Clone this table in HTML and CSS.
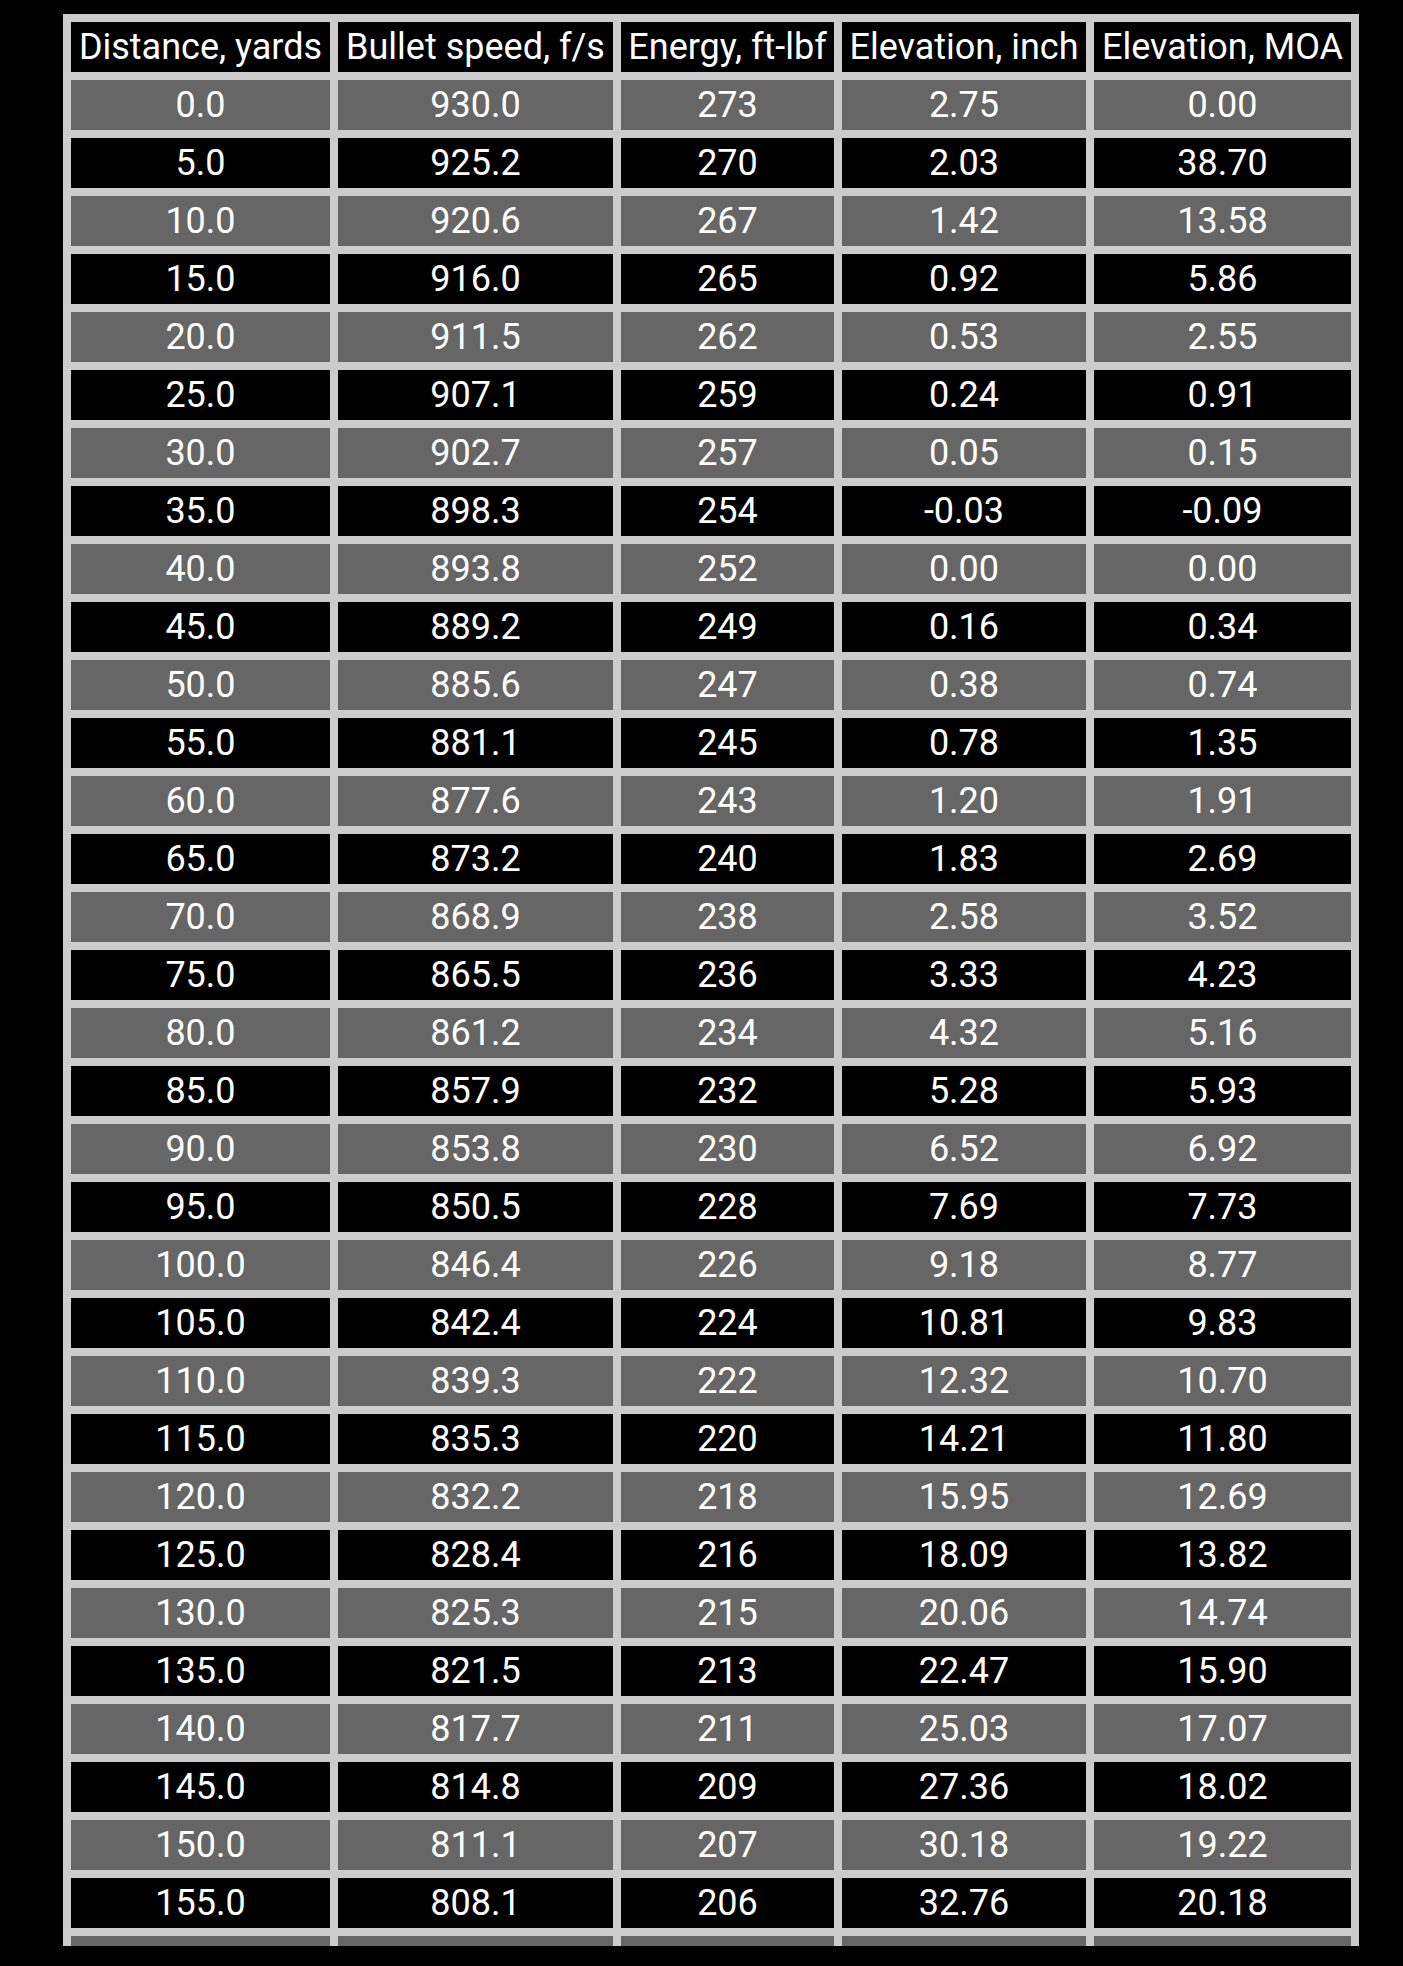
FILE: index.html
```html
<!DOCTYPE html>
<html>
<head>
<meta charset="utf-8">
<link rel="stylesheet" href="styles.css">
</head>
<body>
<div class="viewport">
<table class="ballistics">
<colgroup>
<col class="c1"><col class="c2"><col class="c3"><col class="c4"><col class="c5">
</colgroup>
<thead>
<tr><th>Distance, yards</th><th>Bullet speed, f/s</th><th>Energy, ft-lbf</th><th>Elevation, inch</th><th>Elevation, MOA</th></tr>
</thead>
<tbody>
<tr><td>0.0</td><td>930.0</td><td>273</td><td>2.75</td><td>0.00</td></tr>
<tr><td>5.0</td><td>925.2</td><td>270</td><td>2.03</td><td>38.70</td></tr>
<tr><td>10.0</td><td>920.6</td><td>267</td><td>1.42</td><td>13.58</td></tr>
<tr><td>15.0</td><td>916.0</td><td>265</td><td>0.92</td><td>5.86</td></tr>
<tr><td>20.0</td><td>911.5</td><td>262</td><td>0.53</td><td>2.55</td></tr>
<tr><td>25.0</td><td>907.1</td><td>259</td><td>0.24</td><td>0.91</td></tr>
<tr><td>30.0</td><td>902.7</td><td>257</td><td>0.05</td><td>0.15</td></tr>
<tr><td>35.0</td><td>898.3</td><td>254</td><td>-0.03</td><td>-0.09</td></tr>
<tr><td>40.0</td><td>893.8</td><td>252</td><td>0.00</td><td>0.00</td></tr>
<tr><td>45.0</td><td>889.2</td><td>249</td><td>0.16</td><td>0.34</td></tr>
<tr><td>50.0</td><td>885.6</td><td>247</td><td>0.38</td><td>0.74</td></tr>
<tr><td>55.0</td><td>881.1</td><td>245</td><td>0.78</td><td>1.35</td></tr>
<tr><td>60.0</td><td>877.6</td><td>243</td><td>1.20</td><td>1.91</td></tr>
<tr><td>65.0</td><td>873.2</td><td>240</td><td>1.83</td><td>2.69</td></tr>
<tr><td>70.0</td><td>868.9</td><td>238</td><td>2.58</td><td>3.52</td></tr>
<tr><td>75.0</td><td>865.5</td><td>236</td><td>3.33</td><td>4.23</td></tr>
<tr><td>80.0</td><td>861.2</td><td>234</td><td>4.32</td><td>5.16</td></tr>
<tr><td>85.0</td><td>857.9</td><td>232</td><td>5.28</td><td>5.93</td></tr>
<tr><td>90.0</td><td>853.8</td><td>230</td><td>6.52</td><td>6.92</td></tr>
<tr><td>95.0</td><td>850.5</td><td>228</td><td>7.69</td><td>7.73</td></tr>
<tr><td>100.0</td><td>846.4</td><td>226</td><td>9.18</td><td>8.77</td></tr>
<tr><td>105.0</td><td>842.4</td><td>224</td><td>10.81</td><td>9.83</td></tr>
<tr><td>110.0</td><td>839.3</td><td>222</td><td>12.32</td><td>10.70</td></tr>
<tr><td>115.0</td><td>835.3</td><td>220</td><td>14.21</td><td>11.80</td></tr>
<tr><td>120.0</td><td>832.2</td><td>218</td><td>15.95</td><td>12.69</td></tr>
<tr><td>125.0</td><td>828.4</td><td>216</td><td>18.09</td><td>13.82</td></tr>
<tr><td>130.0</td><td>825.3</td><td>215</td><td>20.06</td><td>14.74</td></tr>
<tr><td>135.0</td><td>821.5</td><td>213</td><td>22.47</td><td>15.90</td></tr>
<tr><td>140.0</td><td>817.7</td><td>211</td><td>25.03</td><td>17.07</td></tr>
<tr><td>145.0</td><td>814.8</td><td>209</td><td>27.36</td><td>18.02</td></tr>
<tr><td>150.0</td><td>811.1</td><td>207</td><td>30.18</td><td>19.22</td></tr>
<tr><td>155.0</td><td>808.1</td><td>206</td><td>32.76</td><td>20.18</td></tr>
<tr><td></td><td></td><td></td><td></td><td></td></tr>
<tr><td></td><td></td><td></td><td></td><td></td></tr>
</tbody>
</table>
</div>
</body>
</html>
```
FILE: styles.css
```css
html, body {
  margin: 0;
  padding: 0;
  background: #000;
}
body {
  font-family: Roboto, "Liberation Sans", sans-serif;
  color: #fff;
}
.viewport {
  height: 1946px;
  overflow: hidden;
  padding: 14px 0 0 63px;
  box-sizing: border-box;
}
.ballistics {
  border-collapse: separate;
  border-spacing: 8px;
  background: #cccccc;
  table-layout: fixed;
  width: 1296px;
}
.c1 { width: 259px; }
.c2 { width: 275px; }
.c3 { width: 213px; }
.c4 { width: 244px; }
.c5 { width: 257px; }
.ballistics th,
.ballistics td {
  padding: 0;
  height: 50px;
  line-height: 50px;
  font-size: 36px;
  font-weight: 400;
  text-align: center;
  white-space: nowrap;
  background: #000;
  color: #fff;
  overflow: hidden;
}
.ballistics tbody tr:nth-child(odd) td {
  background: #666666;
}
```
